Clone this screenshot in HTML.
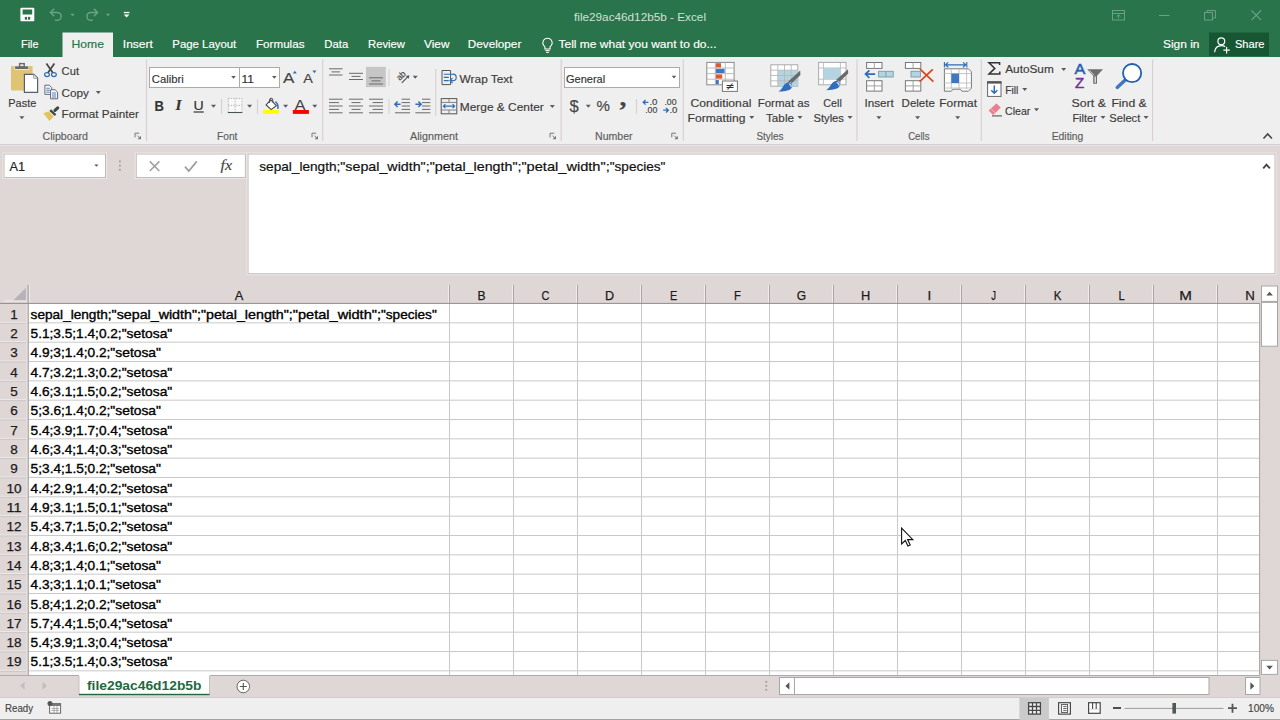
<!DOCTYPE html>
<html lang="en"><head><meta charset="utf-8"><meta name="viewport" content="width=1280, height=720"><title>file29ac46d12b5b - Excel</title>
<style>
html,body{margin:0;padding:0;background:#fff;}
body{width:1280px;height:720px;overflow:hidden;position:relative;font-family:"Liberation Sans", sans-serif;}
.sec{position:absolute;left:0;width:1280px;overflow:hidden;}
.sec svg{display:block;font-family:"Liberation Sans", sans-serif;}
text{white-space:pre;}
</style></head>
<body>
<div class="sec" id="titlebar" style="top:0px;height:57px;background:#29744a"><svg width="1280" height="57" viewBox="0 0 1280 57">
<rect x="20.4" y="7.7" width="13.9" height="13.5" fill="#ffffff" rx="1"/>
<rect x="22.6" y="9.5" width="9.6" height="5" fill="#29744a"/>
<rect x="24.8" y="16.9" width="5.4" height="2.8" fill="#29744a"/>
<rect x="27" y="16.9" width="1" height="2.8" fill="#ffffff"/>
<path d="M51 12.5h6.2a3.9 3.9 0 0 1 0 7.8h-2.2" fill="none" stroke="#6aa285" stroke-width="1.5"/>
<path d="M54.2 8.8l-3.7 3.7l3.7 3.7" fill="none" stroke="#6aa285" stroke-width="1.5"/>
<path d="M70.3 13.7h4.4l-2.2 2.6z" fill="#6aa285"/>
<path d="M97 12.5h-6.2a3.9 3.9 0 0 0 0 7.8h2.2" fill="none" stroke="#6aa285" stroke-width="1.5"/>
<path d="M93.8 8.8l3.7 3.7l-3.7 3.7" fill="none" stroke="#6aa285" stroke-width="1.5"/>
<path d="M105.8 13.7h4.4l-2.2 2.6z" fill="#6aa285"/>
<rect x="123.8" y="11.9" width="5.6" height="1.3" fill="#ffffff"/>
<path d="M123.8 14.4h5.6l-2.8 3z" fill="#ffffff"/>
<text x="574" y="20.5" font-size="11.4" fill="#cfe2d6" textLength="132" lengthAdjust="spacingAndGlyphs">file29ac46d12b5b - Excel</text>
<rect x="1112.5" y="10.5" width="12" height="9.5" fill="none" stroke="#69a184" stroke-width="1"/>
<line x1="1112.5" y1="13.5" x2="1124.5" y2="13.5" stroke="#69a184" stroke-width="1"/>
<path d="M1118.5 18.5v-3.5m-1.8 1.6l1.8-1.8l1.8 1.8" fill="none" stroke="#69a184" stroke-width="1"/>
<line x1="1159" y1="15.5" x2="1169.5" y2="15.5" stroke="#69a184" stroke-width="1"/>
<rect x="1204.5" y="12.5" width="8" height="7.5" fill="none" stroke="#69a184" stroke-width="1"/>
<path d="M1207 12.5v-2h8.5v7.5h-3" fill="none" stroke="#69a184" stroke-width="1"/>
<path d="M1251.5 10.5l9.5 9.5m0-9.5l-9.5 9.5" fill="none" stroke="#69a184" stroke-width="1.1"/>
<rect x="62.5" y="32.5" width="50.5" height="25" fill="#efefef"/>
<text x="21" y="48.4" font-size="11.3" fill="#ffffff" stroke="#ffffff" stroke-width="0.16" textLength="17.5" lengthAdjust="spacingAndGlyphs">File</text>
<text x="71.5" y="48.4" font-size="11.3" fill="#29744a" stroke="#29744a" stroke-width="0.16" textLength="32.5" lengthAdjust="spacingAndGlyphs">Home</text>
<text x="122.8" y="48.4" font-size="11.3" fill="#ffffff" stroke="#ffffff" stroke-width="0.16" textLength="30" lengthAdjust="spacingAndGlyphs">Insert</text>
<text x="172.3" y="48.4" font-size="11.3" fill="#ffffff" stroke="#ffffff" stroke-width="0.16" textLength="64" lengthAdjust="spacingAndGlyphs">Page Layout</text>
<text x="256" y="48.4" font-size="11.3" fill="#ffffff" stroke="#ffffff" stroke-width="0.16" textLength="48.5" lengthAdjust="spacingAndGlyphs">Formulas</text>
<text x="324.3" y="48.4" font-size="11.3" fill="#ffffff" stroke="#ffffff" stroke-width="0.16" textLength="24" lengthAdjust="spacingAndGlyphs">Data</text>
<text x="368" y="48.4" font-size="11.3" fill="#ffffff" stroke="#ffffff" stroke-width="0.16" textLength="37" lengthAdjust="spacingAndGlyphs">Review</text>
<text x="424" y="48.4" font-size="11.3" fill="#ffffff" stroke="#ffffff" stroke-width="0.16" textLength="25.5" lengthAdjust="spacingAndGlyphs">View</text>
<text x="467.8" y="48.4" font-size="11.3" fill="#ffffff" stroke="#ffffff" stroke-width="0.16" textLength="53.5" lengthAdjust="spacingAndGlyphs">Developer</text>
<path d="M547.5 38.2a4.6 4.6 0 0 1 2.6 8.4v2.4h-5.2v-2.4a4.6 4.6 0 0 1 2.6-8.4z" fill="none" stroke="#ffffff" stroke-width="1.1"/>
<path d="M545.3 50.6h4.4M546 52.3h3" fill="none" stroke="#ffffff" stroke-width="1"/>
<text x="558.5" y="48.4" font-size="11.3" fill="#ffffff" stroke="#ffffff" stroke-width="0.16" textLength="158" lengthAdjust="spacingAndGlyphs">Tell me what you want to do...</text>
<text x="1163" y="48.4" font-size="11.3" fill="#ffffff" stroke="#ffffff" stroke-width="0.16" textLength="36.5" lengthAdjust="spacingAndGlyphs">Sign in</text>
<rect x="1209" y="32.5" width="60" height="23.5" fill="#165633"/>
<circle cx="1221.3" cy="41.3" r="3.4" fill="none" stroke="#ffffff" stroke-width="1.2"/>
<path d="M1214.6 52.2c0.4-4.2 3-6.6 6.7-6.6c1.6 0 2.9 0.4 3.9 1.2" fill="none" stroke="#ffffff" stroke-width="1.2"/>
<path d="M1226.6 47v6.4M1223.4 50.2h6.4" fill="none" stroke="#ffffff" stroke-width="1.2"/>
<text x="1235" y="48.4" font-size="11.3" fill="#ffffff" stroke="#ffffff" stroke-width="0.16" textLength="29.5" lengthAdjust="spacingAndGlyphs">Share</text>
</svg></div>
<div class="sec" id="ribbon" style="top:57px;height:89px;background:#efefef"><svg width="1280" height="89" viewBox="0 57 1280 89">
<line x1="0" y1="144.5" x2="1280" y2="144.5" stroke="#d2d0d0" stroke-width="1"/>
<line x1="0" y1="145.5" x2="1280" y2="145.5" stroke="#e8e4e4" stroke-width="1"/>
<line x1="146.5" y1="59.5" x2="146.5" y2="141" stroke="#dad0d0" stroke-width="1.2"/>
<line x1="322.7" y1="59.5" x2="322.7" y2="141" stroke="#dad0d0" stroke-width="1.2"/>
<line x1="561.2" y1="59.5" x2="561.2" y2="141" stroke="#dad0d0" stroke-width="1.2"/>
<line x1="683.3" y1="59.5" x2="683.3" y2="141" stroke="#dad0d0" stroke-width="1.2"/>
<line x1="857" y1="59.5" x2="857" y2="141" stroke="#dad0d0" stroke-width="1.2"/>
<line x1="981.3" y1="59.5" x2="981.3" y2="141" stroke="#dad0d0" stroke-width="1.2"/>
<line x1="1152.6" y1="59.5" x2="1152.6" y2="141" stroke="#dad0d0" stroke-width="1.2"/>
<line x1="221.5" y1="99" x2="221.5" y2="114" stroke="#dad0d0" stroke-width="1.1"/>
<line x1="257.5" y1="99" x2="257.5" y2="114" stroke="#dad0d0" stroke-width="1.1"/>
<line x1="389" y1="69" x2="389" y2="86" stroke="#dad0d0" stroke-width="1.1"/>
<line x1="389" y1="99" x2="389" y2="114" stroke="#dad0d0" stroke-width="1.1"/>
<line x1="435.7" y1="69" x2="435.7" y2="116" stroke="#dad0d0" stroke-width="1.1"/>
<line x1="636.5" y1="99" x2="636.5" y2="114" stroke="#dad0d0" stroke-width="1.1"/>
<text x="42.5" y="139.7" font-size="11.3" fill="#5c5c5c" stroke="#5c5c5c" stroke-width="0.16" textLength="45.5" lengthAdjust="spacingAndGlyphs">Clipboard</text>
<text x="217" y="139.7" font-size="11.3" fill="#5c5c5c" stroke="#5c5c5c" stroke-width="0.16" textLength="20.4" lengthAdjust="spacingAndGlyphs">Font</text>
<text x="410" y="139.7" font-size="11.3" fill="#5c5c5c" stroke="#5c5c5c" stroke-width="0.16" textLength="48" lengthAdjust="spacingAndGlyphs">Alignment</text>
<text x="595" y="139.7" font-size="11.3" fill="#5c5c5c" stroke="#5c5c5c" stroke-width="0.16" textLength="37.6" lengthAdjust="spacingAndGlyphs">Number</text>
<text x="756.4" y="139.7" font-size="11.3" fill="#5c5c5c" stroke="#5c5c5c" stroke-width="0.16" textLength="27" lengthAdjust="spacingAndGlyphs">Styles</text>
<text x="908.2" y="139.7" font-size="11.3" fill="#5c5c5c" stroke="#5c5c5c" stroke-width="0.16" textLength="21.3" lengthAdjust="spacingAndGlyphs">Cells</text>
<text x="1051.7" y="139.7" font-size="11.3" fill="#5c5c5c" stroke="#5c5c5c" stroke-width="0.16" textLength="31.7" lengthAdjust="spacingAndGlyphs">Editing</text>
<path d="M135 137.39999999999998v-4.2h4.2" fill="none" stroke="#777" stroke-width="1"/>
<path d="M137.4 135.6l3 3" fill="none" stroke="#777" stroke-width="1"/>
<path d="M141 135.79999999999998v3.4h-3.4z" fill="#777"/>
<path d="M312 137.39999999999998v-4.2h4.2" fill="none" stroke="#777" stroke-width="1"/>
<path d="M314.4 135.6l3 3" fill="none" stroke="#777" stroke-width="1"/>
<path d="M318 135.79999999999998v3.4h-3.4z" fill="#777"/>
<path d="M550 137.39999999999998v-4.2h4.2" fill="none" stroke="#777" stroke-width="1"/>
<path d="M552.4 135.6l3 3" fill="none" stroke="#777" stroke-width="1"/>
<path d="M556 135.79999999999998v3.4h-3.4z" fill="#777"/>
<path d="M671.8 137.39999999999998v-4.2h4.2" fill="none" stroke="#777" stroke-width="1"/>
<path d="M674.1999999999999 135.6l3 3" fill="none" stroke="#777" stroke-width="1"/>
<path d="M677.8 135.79999999999998v3.4h-3.4z" fill="#777"/>
<path d="M1263.5 138.5l4.2-4.6l4.2 4.6" fill="none" stroke="#444" stroke-width="1.6"/>
<rect x="11" y="66" width="21.6" height="24.6" fill="#dfc474" rx="1"/>
<rect x="14.5" y="65.6" width="14.4" height="4.2" fill="#f4efe0"/>
<rect x="15.1" y="66.3" width="13.2" height="2.7" fill="#6a6a6a"/>
<rect x="19.6" y="63.6" width="4.6" height="3.2" fill="#f4efe0" stroke="#6a6a6a" stroke-width="1.4"/>
<path d="M24.4 74.3h9.4l3.8 3.8v14.2h-13.2z" fill="#fff" stroke="#55606a" stroke-width="1.2"/>
<path d="M33.6 74.5v3.8h3.8" fill="#e4e4e4" stroke="#9aa0a6" stroke-width="0.9"/>
<text x="8.3" y="106.6" font-size="11.3" fill="#3b3b3b" stroke="#3b3b3b" stroke-width="0.16" textLength="28" lengthAdjust="spacingAndGlyphs">Paste</text>
<path d="M19.4 116.2h5l-2.5 3z" fill="#5a5a5a"/>
<path d="M46.4 63.6l6.6 9.4M54.4 63.6l-6.6 9.4" fill="none" stroke="#484848" stroke-width="1.8"/>
<ellipse cx="47" cy="74.6" rx="2.4" ry="2" fill="none" stroke="#2e6db4" stroke-width="1.2"/>
<ellipse cx="53.9" cy="74.6" rx="2.4" ry="2" fill="none" stroke="#2e6db4" stroke-width="1.2"/>
<text x="61.6" y="74.5" font-size="11.3" fill="#3b3b3b" stroke="#3b3b3b" stroke-width="0.16" textLength="17.4" lengthAdjust="spacingAndGlyphs">Cut</text>
<path d="M44.9 85.2h4.4l2.4 2.4v6.8h-6.8z" fill="#fff" stroke="#666" stroke-width="1"/>
<path d="M46.2 88.2h3.6M46.2 90.2h3.6M46.2 92.2h3.6" fill="none" stroke="#2e6db4" stroke-width="0.9"/>
<path d="M50.6 89.8h4.6l2.4 2.4v6.6h-7z" fill="#fff" stroke="#666" stroke-width="1"/>
<path d="M52 93h4.2M52 95h4.2M52 97h4.2" fill="none" stroke="#2e6db4" stroke-width="0.9"/>
<text x="61.6" y="96.6" font-size="11.3" fill="#3b3b3b" stroke="#3b3b3b" stroke-width="0.16" textLength="27.4" lengthAdjust="spacingAndGlyphs">Copy</text>
<path d="M95.8 91h5l-2.5 3z" fill="#5a5a5a"/>
<path d="M43.3 113.3l5.3-1.9l5 5l-4.1 4.6z" fill="#e6c25a"/>
<path d="M50.2 110.2l5.3 5" fill="none" stroke="#3f4b46" stroke-width="2.4"/>
<path d="M55 110.4l2.7-2.5" fill="none" stroke="#3f4b46" stroke-width="3.2" stroke-linecap="round"/>
<text x="61.6" y="118" font-size="11.3" fill="#3b3b3b" stroke="#3b3b3b" stroke-width="0.16" textLength="77.2" lengthAdjust="spacingAndGlyphs">Format Painter</text>
<rect x="149.5" y="67.5" width="90" height="20" fill="#fff" stroke="#ababab" stroke-width="1"/>
<rect x="239.5" y="67.5" width="40" height="20" fill="#fff" stroke="#ababab" stroke-width="1"/>
<text x="151.8" y="82.6" font-size="11.3" fill="#333" stroke="#333" stroke-width="0.16" textLength="32" lengthAdjust="spacingAndGlyphs">Calibri</text>
<path d="M231.2 76h4.6l-2.3 2.8z" fill="#5a5a5a"/>
<text x="241.6" y="82.6" font-size="11.3" fill="#333" stroke="#333" stroke-width="0.16" textLength="12.4" lengthAdjust="spacingAndGlyphs">11</text>
<path d="M272 76h4.6l-2.3 2.8z" fill="#5a5a5a"/>
<text x="283" y="83.4" font-size="15" fill="#444" stroke="#444" stroke-width="0.16" textLength="11.4" lengthAdjust="spacingAndGlyphs">A</text>
<path d="M292.8 73.4h4l-2-2.6z" fill="#2e6db4"/>
<text x="303.2" y="83.4" font-size="12" fill="#444" stroke="#444" stroke-width="0.16" textLength="9.6" lengthAdjust="spacingAndGlyphs">A</text>
<path d="M312.4 70.6h4l-2 2.6z" fill="#2e6db4"/>
<text x="154.4" y="110.6" font-size="14.5" fill="#333" stroke="#333" stroke-width="0.16" textLength="9.4" lengthAdjust="spacingAndGlyphs" font-weight="bold">B</text>
<text x="175.4" y="110.4" font-size="14" fill="#333" stroke="#333" stroke-width="0.16" textLength="6" lengthAdjust="spacingAndGlyphs" font-weight="bold" font-style="italic" font-family='"Liberation Serif", serif'>I</text>
<text x="193.6" y="110.2" font-size="13.5" fill="#333" stroke="#333" stroke-width="0.16" textLength="10.2" lengthAdjust="spacingAndGlyphs">U</text>
<line x1="193.6" y1="112" x2="203.8" y2="112" stroke="#333" stroke-width="1.2"/>
<path d="M211 104.7h5l-2.5 3z" fill="#5a5a5a"/>
<rect x="228.3" y="98.4" width="13.6" height="14" fill="#f8f8f8"/>
<path d="M228.3 98.4h13.6M228.3 105.4h13.6M228.3 98.4v14M235.1 98.4v14M241.9 98.4v14" fill="none" stroke="#b4b4b4" stroke-width="1" stroke-dasharray="1.3 1.3"/>
<line x1="227.8" y1="112.5" x2="242.4" y2="112.5" stroke="#45584d" stroke-width="1.1"/>
<path d="M247.1 104.7h5l-2.5 3z" fill="#5a5a5a"/>
<path d="M270.8 99.9l5.5 5.8l-5.1 3.9l-5.1-4.7z" fill="#fff" stroke="#444" stroke-width="1.1"/>
<path d="M269.6 103v-3.2a1.6 1.6 0 0 1 3.2 0v2.6" fill="none" stroke="#444" stroke-width="1"/>
<path d="M275.4 101.6c2.2 1.8 3 4.4 2.4 7.2" fill="none" stroke="#2e6db4" stroke-width="1.5"/>
<rect x="263" y="110" width="16" height="3.9" fill="#ffff00"/>
<path d="M283.1 104.7h5l-2.5 3z" fill="#5a5a5a"/>
<text x="294.6" y="109.5" font-size="14.4" fill="#444" textLength="11" lengthAdjust="spacingAndGlyphs">A</text>
<rect x="292.9" y="110" width="16" height="3.9" fill="#ff0000"/>
<path d="M312.3 104.7h5l-2.5 3z" fill="#5a5a5a"/>
<line x1="329" y1="68.8" x2="342.6" y2="68.8" stroke="#6a6a6a" stroke-width="1"/>
<line x1="329" y1="75" x2="342.6" y2="75" stroke="#6a6a6a" stroke-width="1"/>
<line x1="331.5" y1="71.9" x2="340" y2="71.9" stroke="#6a6a6a" stroke-width="1"/>
<line x1="349" y1="73.3" x2="363" y2="73.3" stroke="#6a6a6a" stroke-width="1"/>
<line x1="349" y1="79.5" x2="363" y2="79.5" stroke="#6a6a6a" stroke-width="1"/>
<line x1="351.5" y1="76.4" x2="360.5" y2="76.4" stroke="#6a6a6a" stroke-width="1"/>
<rect x="366" y="66.9" width="19.8" height="20.2" fill="#c6c6c6"/>
<line x1="369" y1="77.8" x2="383" y2="77.8" stroke="#6a6a6a" stroke-width="1"/>
<line x1="369" y1="84" x2="383" y2="84" stroke="#6a6a6a" stroke-width="1"/>
<line x1="371.5" y1="80.9" x2="380.5" y2="80.9" stroke="#6a6a6a" stroke-width="1"/>
<text x="396.2" y="78.6" font-size="8.6" fill="#444" stroke="#444" stroke-width="0.16" textLength="9.4" lengthAdjust="spacingAndGlyphs" transform="rotate(-45 401 75.6)">ab</text>
<path d="M401.8 82.8l6.4-6.4" fill="none" stroke="#555" stroke-width="1.2"/>
<path d="M409.4 75.2l-0.7 3.6l-2.9-2.9z" fill="#555"/>
<path d="M412.7 75.7h5l-2.5 3z" fill="#5a5a5a"/>
<path d="M442 70.5h8.6M442 84.6h8.6M442 70.5v14.1M450.6 70.5v14.1" fill="none" stroke="#555" stroke-width="1"/>
<path d="M443.8 74.2h9.4M443.8 77.4h5M443.8 80.6h5" fill="none" stroke="#2e6db4" stroke-width="1.1"/>
<path d="M453 74.2a3.2 3.2 0 0 1 0 6.4h-2.6" fill="none" stroke="#2e6db4" stroke-width="1.2"/>
<path d="M452.6 78.2l-2.6 2.4l2.6 2.4" fill="none" stroke="#2e6db4" stroke-width="1.1"/>
<text x="459.6" y="82.5" font-size="11.3" fill="#3b3b3b" stroke="#3b3b3b" stroke-width="0.16" textLength="53" lengthAdjust="spacingAndGlyphs">Wrap Text</text>
<line x1="329" y1="99.2" x2="342.6" y2="99.2" stroke="#6a6a6a" stroke-width="1"/>
<line x1="329" y1="106" x2="342.6" y2="106" stroke="#6a6a6a" stroke-width="1"/>
<line x1="329" y1="112.8" x2="342.6" y2="112.8" stroke="#6a6a6a" stroke-width="1"/>
<line x1="329" y1="102.6" x2="339" y2="102.6" stroke="#6a6a6a" stroke-width="1"/>
<line x1="329" y1="109.4" x2="339" y2="109.4" stroke="#6a6a6a" stroke-width="1"/>
<line x1="349" y1="99.2" x2="363" y2="99.2" stroke="#6a6a6a" stroke-width="1"/>
<line x1="349" y1="106" x2="363" y2="106" stroke="#6a6a6a" stroke-width="1"/>
<line x1="349" y1="112.8" x2="363" y2="112.8" stroke="#6a6a6a" stroke-width="1"/>
<line x1="351.5" y1="102.6" x2="360.5" y2="102.6" stroke="#6a6a6a" stroke-width="1"/>
<line x1="351.5" y1="109.4" x2="360.5" y2="109.4" stroke="#6a6a6a" stroke-width="1"/>
<line x1="369" y1="99.2" x2="383" y2="99.2" stroke="#6a6a6a" stroke-width="1"/>
<line x1="369" y1="106" x2="383" y2="106" stroke="#6a6a6a" stroke-width="1"/>
<line x1="369" y1="112.8" x2="383" y2="112.8" stroke="#6a6a6a" stroke-width="1"/>
<line x1="372.6" y1="102.6" x2="383" y2="102.6" stroke="#6a6a6a" stroke-width="1"/>
<line x1="372.6" y1="109.4" x2="383" y2="109.4" stroke="#6a6a6a" stroke-width="1"/>
<line x1="401.6" y1="99.2" x2="410" y2="99.2" stroke="#6a6a6a" stroke-width="1"/>
<line x1="401.6" y1="102.6" x2="410" y2="102.6" stroke="#6a6a6a" stroke-width="1"/>
<line x1="401.6" y1="106" x2="410" y2="106" stroke="#6a6a6a" stroke-width="1"/>
<line x1="401.6" y1="109.4" x2="410" y2="109.4" stroke="#6a6a6a" stroke-width="1"/>
<line x1="395" y1="112.8" x2="410" y2="112.8" stroke="#6a6a6a" stroke-width="1"/>
<path d="M395 104.3h5.6M397.6 101.6l-2.8 2.7l2.8 2.7" fill="none" stroke="#2e6db4" stroke-width="1.4"/>
<line x1="422" y1="99.2" x2="430.4" y2="99.2" stroke="#6a6a6a" stroke-width="1"/>
<line x1="422" y1="102.6" x2="430.4" y2="102.6" stroke="#6a6a6a" stroke-width="1"/>
<line x1="422" y1="106" x2="430.4" y2="106" stroke="#6a6a6a" stroke-width="1"/>
<line x1="422" y1="109.4" x2="430.4" y2="109.4" stroke="#6a6a6a" stroke-width="1"/>
<line x1="415.4" y1="112.8" x2="430.4" y2="112.8" stroke="#6a6a6a" stroke-width="1"/>
<path d="M415.4 104.3h5.6M418.4 101.6l2.8 2.7l-2.8 2.7" fill="none" stroke="#2e6db4" stroke-width="1.4"/>
<rect x="441.2" y="98.6" width="15.6" height="15.2" fill="none" stroke="#555" stroke-width="1"/>
<path d="M441.2 102.4h15.6M441.2 110h15.6M449 98.6v3.8M449 110v3.8" fill="none" stroke="#777" stroke-width="0.9"/>
<path d="M443.4 106.2h11.2M445.4 104.2l-2 2l2 2M452.6 104.2l2 2l-2 2" fill="none" stroke="#2e6db4" stroke-width="1.2"/>
<text x="459.8" y="111.3" font-size="11.3" fill="#3b3b3b" stroke="#3b3b3b" stroke-width="0.16" textLength="84" lengthAdjust="spacingAndGlyphs">Merge &amp; Center</text>
<path d="M549.8 105.1h5l-2.5 3z" fill="#5a5a5a"/>
<rect x="564.5" y="67.5" width="115" height="20" fill="#fff" stroke="#ababab" stroke-width="1"/>
<text x="566" y="82.5" font-size="11.3" fill="#333" stroke="#333" stroke-width="0.16" textLength="39.2" lengthAdjust="spacingAndGlyphs">General</text>
<path d="M671.7 75.8h4.6l-2.3 2.8z" fill="#5a5a5a"/>
<text x="569.6" y="111.6" font-size="17" fill="#444" stroke="#444" stroke-width="0.16" textLength="9.2" lengthAdjust="spacingAndGlyphs">$</text>
<path d="M585.8 104.7h5l-2.5 3z" fill="#5a5a5a"/>
<text x="596.6" y="111.4" font-size="15.5" fill="#444" stroke="#444" stroke-width="0.16" textLength="13.4" lengthAdjust="spacingAndGlyphs">%</text>
<text x="619.4" y="106.4" font-size="25" fill="#444" stroke="#444" stroke-width="0.16" textLength="7" lengthAdjust="spacingAndGlyphs" font-weight="bold" font-family='"Liberation Serif", serif'>,</text>
<path d="M643.2 102.3h5.2M645.6 100l-2.4 2.3l2.4 2.3" fill="none" stroke="#2e6db4" stroke-width="1.3"/>
<text x="649.4" y="105.2" font-size="8.5" fill="#444" stroke="#444" stroke-width="0.16" textLength="8" lengthAdjust="spacingAndGlyphs">.0</text>
<text x="645.2" y="113" font-size="8.5" fill="#444" stroke="#444" stroke-width="0.16" textLength="12.2" lengthAdjust="spacingAndGlyphs">.00</text>
<text x="664.4" y="105.2" font-size="8.5" fill="#444" stroke="#444" stroke-width="0.16" textLength="12.2" lengthAdjust="spacingAndGlyphs">.00</text>
<path d="M663.2 110.2h5.2M666 107.9l2.4 2.3l-2.4 2.3" fill="none" stroke="#2e6db4" stroke-width="1.3"/>
<text x="669.4" y="113" font-size="8.5" fill="#444" stroke="#444" stroke-width="0.16" textLength="8" lengthAdjust="spacingAndGlyphs">.0</text>
<rect x="706.8" y="62.4" width="27.3" height="22.4" fill="#fff" stroke="#8a8a8a" stroke-width="1"/>
<path d="M715.3 62.4v22.4M725.3 62.4v22.4M706.8 68h27.3M706.8 73.6h27.3M706.8 79.2h27.3" fill="none" stroke="#b5b5b5" stroke-width="0.9"/>
<rect x="715.8" y="63.2" width="5.2" height="4.2" fill="#dc5b2b"/>
<rect x="715.8" y="68.8" width="8.8" height="4.2" fill="#3f78c0"/>
<rect x="715.8" y="74.4" width="6.4" height="4.2" fill="#dc5b2b"/>
<rect x="715.8" y="80" width="3" height="4.2" fill="#3f78c0"/>
<rect x="722.4" y="81" width="15" height="10.4" fill="#fff" stroke="#777" stroke-width="1"/>
<text x="725.4" y="90.2" font-size="11" fill="#333" stroke="#333" stroke-width="0.16" textLength="9" lengthAdjust="spacingAndGlyphs" font-family='"DejaVu Sans", sans-serif'>≠</text>
<text x="690.4" y="106.6" font-size="11.3" fill="#3b3b3b" stroke="#3b3b3b" stroke-width="0.16" textLength="61" lengthAdjust="spacingAndGlyphs">Conditional</text>
<text x="687.6" y="122.1" font-size="11.3" fill="#3b3b3b" stroke="#3b3b3b" stroke-width="0.16" textLength="57.8" lengthAdjust="spacingAndGlyphs">Formatting</text>
<path d="M749.3 116.1h5l-2.5 3z" fill="#5a5a5a"/>
<rect x="770.8" y="64.8" width="27" height="21.4" fill="#fff" stroke="#aaa" stroke-width="1"/>
<rect x="777.8" y="70.2" width="20" height="16" fill="#b4d4e2"/>
<path d="M777.8 64.8v21.4M784.5 64.8v21.4M791.2 64.8v21.4M770.8 70.2h27M770.8 75.5h27M770.8 80.8h27" fill="none" stroke="#b8b8b8" stroke-width="0.9"/>
<path d="M800.2 70.6l0.2 4.4l-9.6 9.2l-2.6-2.8z" fill="#6a6a6a"/>
<path d="M789.8000000000001 82.19999999999999l1.8 1.9" fill="none" stroke="#f0f0f0" stroke-width="1.2"/>
<path d="M787.4000000000001 82.39999999999999c3.4-0.6 5.4 1.6 4.6 4.6c-0.8 3-4.6 4.4-13.6 4.6c4.4-2.6 5-8 9-9.2z" fill="#2f6dbd"/>
<path d="M788.8000000000001 84.0c1.8 0 2.6 1.4 2.2 3" fill="none" stroke="#dfeaf6" stroke-width="1.2"/>
<text x="757.7" y="106.6" font-size="11.3" fill="#3b3b3b" stroke="#3b3b3b" stroke-width="0.16" textLength="51.8" lengthAdjust="spacingAndGlyphs">Format as</text>
<text x="766" y="122.1" font-size="11.3" fill="#3b3b3b" stroke="#3b3b3b" stroke-width="0.16" textLength="28" lengthAdjust="spacingAndGlyphs">Table</text>
<path d="M797.5 116.1h5l-2.5 3z" fill="#5a5a5a"/>
<rect x="818.6" y="62.4" width="27.4" height="22.4" fill="#fff" stroke="#aaa" stroke-width="1"/>
<path d="M823.4 62.4v22.4M840.4 62.4v22.4M818.6 68h27.4M818.6 79.2h27.4" fill="none" stroke="#b8b8b8" stroke-width="0.9"/>
<rect x="823.4" y="68" width="17" height="11.2" fill="#b4d4e2"/>
<path d="M848 69.2l0.2 4.4l-9.6 9.2l-2.6-2.8z" fill="#6a6a6a"/>
<path d="M837.6 80.8l1.8 1.9" fill="none" stroke="#f0f0f0" stroke-width="1.2"/>
<path d="M835.2 81.0c3.4-0.6 5.4 1.6 4.6 4.6c-0.8 3-4.6 4.4-13.6 4.6c4.4-2.6 5-8 9-9.2z" fill="#2f6dbd"/>
<path d="M836.6 82.60000000000001c1.8 0 2.6 1.4 2.2 3" fill="none" stroke="#dfeaf6" stroke-width="1.2"/>
<text x="823.3" y="106.6" font-size="11.3" fill="#3b3b3b" stroke="#3b3b3b" stroke-width="0.16" textLength="18.5" lengthAdjust="spacingAndGlyphs">Cell</text>
<text x="813.5" y="122.1" font-size="11.3" fill="#3b3b3b" stroke="#3b3b3b" stroke-width="0.16" textLength="30.4" lengthAdjust="spacingAndGlyphs">Styles</text>
<path d="M847.5 116.1h5l-2.5 3z" fill="#5a5a5a"/>
<rect x="866.6" y="62.5" width="15.4" height="5.9" fill="#fff" stroke="#777" stroke-width="1"/>
<path d="M874.3 62.5v5.9" fill="none" stroke="#999" stroke-width="0.9"/>
<rect x="866.6" y="80.7" width="15.4" height="10.4" fill="#fff" stroke="#777" stroke-width="1"/>
<path d="M874.3 80.7v10.4M866.6 85.9h15.4" fill="none" stroke="#999" stroke-width="0.9"/>
<rect x="878.6" y="71.3" width="14.6" height="5.7" fill="#b4d4e2" stroke="#7a9aa8" stroke-width="0.9"/>
<line x1="885.9" y1="71.3" x2="885.9" y2="77" stroke="#7a9aa8" stroke-width="0.9"/>
<path d="M865.4 74.1h9.8M869.4 70.4l-3.9 3.7l3.9 3.7" fill="none" stroke="#2e6db4" stroke-width="1.7"/>
<text x="864.5" y="106.6" font-size="11.3" fill="#3b3b3b" stroke="#3b3b3b" stroke-width="0.16" textLength="29.2" lengthAdjust="spacingAndGlyphs">Insert</text>
<path d="M876.4 116.2h5l-2.5 3z" fill="#5a5a5a"/>
<rect x="905.4" y="62.5" width="15.4" height="5.9" fill="#fff" stroke="#777" stroke-width="1"/>
<path d="M913.1 62.5v5.9" fill="none" stroke="#999" stroke-width="0.9"/>
<rect x="905.4" y="80.7" width="15.4" height="10.4" fill="#fff" stroke="#777" stroke-width="1"/>
<path d="M913.1 80.7v10.4M905.4 85.9h15.4" fill="none" stroke="#999" stroke-width="0.9"/>
<rect x="911" y="71.3" width="9.4" height="5.7" fill="#b4d4e2" stroke="#7a9aa8" stroke-width="0.9"/>
<path d="M920 69.2l13.4 12.4M932.8 69.4l-13.2 12.2" fill="none" stroke="#d64a20" stroke-width="1.8"/>
<text x="901.6" y="106.6" font-size="11.3" fill="#3b3b3b" stroke="#3b3b3b" stroke-width="0.16" textLength="33.2" lengthAdjust="spacingAndGlyphs">Delete</text>
<path d="M915.1 116.2h5l-2.5 3z" fill="#5a5a5a"/>
<path d="M945.4 64.8h20.4M948.2 62.4l-2.8 2.4l2.8 2.4M963 62.4l2.8 2.4l-2.8 2.4" fill="none" stroke="#2e6db4" stroke-width="1.2"/>
<path d="M944.4 62v5.4M966.8 62v5.4" fill="none" stroke="#2e6db4" stroke-width="1.1"/>
<path d="M944.4 68.8h24l3 3v16.4l-3 3h-6.5l-1.6-2h-7.4l-1.6 2h-6.9z" fill="#fff" stroke="#777" stroke-width="1"/>
<path d="M951.3 68.8v20.4M959 68.8v20.4M966.6 68.8v20.4M944.4 73.6h27M944.4 83h27M944.4 88h27" fill="none" stroke="#bdbdbd" stroke-width="0.9"/>
<rect x="951.3" y="73.6" width="7.7" height="9.4" fill="#3f78c0"/>
<text x="939.3" y="106.6" font-size="11.3" fill="#3b3b3b" stroke="#3b3b3b" stroke-width="0.16" textLength="37.7" lengthAdjust="spacingAndGlyphs">Format</text>
<path d="M955.2 116.2h5l-2.5 3z" fill="#5a5a5a"/>
<path d="M999.6 65v-2.2h-10.6l5.8 5.6l-5.8 5.6h10.8v-2.4" fill="none" stroke="#333" stroke-width="1.5"/>
<text x="1005.2" y="73.3" font-size="11.3" fill="#3b3b3b" stroke="#3b3b3b" stroke-width="0.16" textLength="48.6" lengthAdjust="spacingAndGlyphs">AutoSum</text>
<path d="M1061.2 68h5l-2.5 3z" fill="#5a5a5a"/>
<rect x="987.6" y="82" width="13.4" height="14.4" fill="#fff" stroke="#666" stroke-width="1"/>
<rect x="987.1" y="81.2" width="14.4" height="2.4" fill="#555"/>
<path d="M994.3 85.6v7.4M991.2 90.2l3.1 3l3.1-3" fill="none" stroke="#2e6db4" stroke-width="1.5"/>
<text x="1005.2" y="93.8" font-size="11.3" fill="#3b3b3b" stroke="#3b3b3b" stroke-width="0.16" textLength="13.2" lengthAdjust="spacingAndGlyphs">Fill</text>
<path d="M1022.2 87.9h5l-2.5 3z" fill="#5a5a5a"/>
<path d="M996.4 103.4l4.4 4.2l-7.6 7.4l-4.6-4.4z" fill="#ec7d8d"/>
<path d="M990.6 108.4l4.6 4.4" fill="none" stroke="#f6c3ca" stroke-width="1"/>
<line x1="992" y1="115.9" x2="1002" y2="115.9" stroke="#555" stroke-width="1.1"/>
<text x="1005" y="114.5" font-size="11.3" fill="#3b3b3b" stroke="#3b3b3b" stroke-width="0.16" textLength="25.4" lengthAdjust="spacingAndGlyphs">Clear</text>
<path d="M1034 108.3h5l-2.5 3z" fill="#5a5a5a"/>
<text x="1074.5" y="73.5" font-size="15.4" fill="#2160b0" stroke="#2160b0" stroke-width="0.5" textLength="10.8" lengthAdjust="spacingAndGlyphs">A</text>
<text x="1075" y="87.9" font-size="15.4" fill="#7030a0" stroke="#7030a0" stroke-width="0.5" textLength="9.2" lengthAdjust="spacingAndGlyphs">Z</text>
<path d="M1087.2 69.2h15.8l-6 6.6v7.9h-3.8v-7.9z" fill="#6e6e6e"/>
<path d="M1095.2 76.4v6.4" fill="none" stroke="#f4f4f4" stroke-width="1.2"/>
<path d="M1089.6 70.4l4.4 4.8" fill="none" stroke="#e0e0e0" stroke-width="0.8"/>
<text x="1071.6" y="106.6" font-size="11.3" fill="#3b3b3b" stroke="#3b3b3b" stroke-width="0.16" textLength="34.4" lengthAdjust="spacingAndGlyphs">Sort &amp;</text>
<text x="1072.4" y="122.1" font-size="11.3" fill="#3b3b3b" stroke="#3b3b3b" stroke-width="0.16" textLength="24.4" lengthAdjust="spacingAndGlyphs">Filter</text>
<path d="M1100.5 116.1h5l-2.5 3z" fill="#5a5a5a"/>
<path d="M1125.8 79.4l-8.6 8" fill="none" stroke="#3f78c0" stroke-width="3.4" stroke-linecap="round"/>
<circle cx="1132.1" cy="73.1" r="9.1" fill="#fff" stroke="#2160b0" stroke-width="1.8"/>
<text x="1111.4" y="106.6" font-size="11.3" fill="#3b3b3b" stroke="#3b3b3b" stroke-width="0.16" textLength="35.4" lengthAdjust="spacingAndGlyphs">Find &amp;</text>
<text x="1109.3" y="122.1" font-size="11.3" fill="#3b3b3b" stroke="#3b3b3b" stroke-width="0.16" textLength="31" lengthAdjust="spacingAndGlyphs">Select</text>
<path d="M1143.5 116.1h5l-2.5 3z" fill="#5a5a5a"/>
</svg></div>
<div class="sec" id="formulabar" style="top:146px;height:139px;background:#dfd6d6"><svg width="1280" height="139" viewBox="0 146 1280 139">
<rect x="4" y="154" width="101.5" height="23.6" fill="#fff" stroke="#bdb8b8" stroke-width="1"/>
<rect x="3" y="153" width="103.5" height="25.6" fill="none" stroke="#ece8e8" stroke-width="1"/>
<text x="9.5" y="171" font-size="12.6" fill="#222" stroke="#222" stroke-width="0.16" textLength="15.6" lengthAdjust="spacingAndGlyphs">A1</text>
<path d="M94.3 164.4h4.2l-2.1 2.4z" fill="#555"/>
<rect x="119" y="160.5" width="1.8" height="1.8" fill="#a5a0a0"/>
<rect x="119" y="164.7" width="1.8" height="1.8" fill="#a5a0a0"/>
<rect x="119" y="168.9" width="1.8" height="1.8" fill="#a5a0a0"/>
<rect x="136.2" y="154" width="109.2" height="23.6" fill="#fff" stroke="#bdb8b8" stroke-width="1"/>
<rect x="135.2" y="153" width="111.2" height="25.6" fill="none" stroke="#ece8e8" stroke-width="1"/>
<path d="M149.8 161.4l9.6 9.6M159.4 161.4l-9.6 9.6" fill="none" stroke="#a0a0a0" stroke-width="1.5"/>
<path d="M185 166.6l3.8 4.4l8-9.6" fill="none" stroke="#a0a0a0" stroke-width="1.8"/>
<text x="220.6" y="170" font-size="15.5" fill="#444" stroke="#444" stroke-width="0.16" textLength="11.6" lengthAdjust="spacingAndGlyphs" font-style="italic" font-family='"Liberation Serif", serif'>fx</text>
<rect x="248" y="154" width="1027" height="119.8" fill="#fff" stroke="#bdb8b8" stroke-width="1"/>
<rect x="247" y="153" width="1029" height="121.8" fill="none" stroke="#ece8e8" stroke-width="1"/>
<text y="171" font-size="12.6" fill="#111" stroke="#111" stroke-width="0.2"><tspan x="259.3" textLength="80.9945" lengthAdjust="spacingAndGlyphs">sepal_length;</tspan><tspan x="340.295" textLength="89.3564" lengthAdjust="spacingAndGlyphs">"sepal_width";</tspan><tspan x="429.651" textLength="91.7989" lengthAdjust="spacingAndGlyphs">"petal_length";</tspan><tspan x="521.45" textLength="88.2611" lengthAdjust="spacingAndGlyphs">"petal_width";</tspan><tspan x="609.711" textLength="55.7635" lengthAdjust="spacingAndGlyphs">"species"</tspan></text>
<path d="M1263.2 168.4l3.3-3.7l3.3 3.7" fill="none" stroke="#444" stroke-width="1.8"/>
</svg></div>
<div class="sec" id="grid" style="top:285px;height:390px;background:#ffffff"><svg width="1280" height="390" viewBox="0 285 1280 390">
<rect x="0" y="285" width="1280" height="18.6" fill="#dfd6d6"/>
<rect x="0" y="285" width="28" height="390" fill="#dfd6d6"/>
<rect x="1260" y="285" width="20" height="390" fill="#dfd6d6"/>
<line x1="28.5" y1="322.833" x2="1259" y2="322.833" stroke="#c9c9c9" stroke-width="1"/>
<line x1="0" y1="322.333" x2="26.5" y2="322.333" stroke="#efeaea" stroke-width="1"/>
<line x1="0" y1="323.333" x2="26.5" y2="323.333" stroke="#cdc7c7" stroke-width="1"/>
<line x1="28.5" y1="342.167" x2="1259" y2="342.167" stroke="#c9c9c9" stroke-width="1"/>
<line x1="0" y1="341.667" x2="26.5" y2="341.667" stroke="#efeaea" stroke-width="1"/>
<line x1="0" y1="342.667" x2="26.5" y2="342.667" stroke="#cdc7c7" stroke-width="1"/>
<line x1="28.5" y1="361.5" x2="1259" y2="361.5" stroke="#c9c9c9" stroke-width="1"/>
<line x1="0" y1="361" x2="26.5" y2="361" stroke="#efeaea" stroke-width="1"/>
<line x1="0" y1="362" x2="26.5" y2="362" stroke="#cdc7c7" stroke-width="1"/>
<line x1="28.5" y1="380.833" x2="1259" y2="380.833" stroke="#c9c9c9" stroke-width="1"/>
<line x1="0" y1="380.333" x2="26.5" y2="380.333" stroke="#efeaea" stroke-width="1"/>
<line x1="0" y1="381.333" x2="26.5" y2="381.333" stroke="#cdc7c7" stroke-width="1"/>
<line x1="28.5" y1="400.167" x2="1259" y2="400.167" stroke="#c9c9c9" stroke-width="1"/>
<line x1="0" y1="399.667" x2="26.5" y2="399.667" stroke="#efeaea" stroke-width="1"/>
<line x1="0" y1="400.667" x2="26.5" y2="400.667" stroke="#cdc7c7" stroke-width="1"/>
<line x1="28.5" y1="419.5" x2="1259" y2="419.5" stroke="#c9c9c9" stroke-width="1"/>
<line x1="0" y1="419" x2="26.5" y2="419" stroke="#efeaea" stroke-width="1"/>
<line x1="0" y1="420" x2="26.5" y2="420" stroke="#cdc7c7" stroke-width="1"/>
<line x1="28.5" y1="438.833" x2="1259" y2="438.833" stroke="#c9c9c9" stroke-width="1"/>
<line x1="0" y1="438.333" x2="26.5" y2="438.333" stroke="#efeaea" stroke-width="1"/>
<line x1="0" y1="439.333" x2="26.5" y2="439.333" stroke="#cdc7c7" stroke-width="1"/>
<line x1="28.5" y1="458.166" x2="1259" y2="458.166" stroke="#c9c9c9" stroke-width="1"/>
<line x1="0" y1="457.666" x2="26.5" y2="457.666" stroke="#efeaea" stroke-width="1"/>
<line x1="0" y1="458.666" x2="26.5" y2="458.666" stroke="#cdc7c7" stroke-width="1"/>
<line x1="28.5" y1="477.5" x2="1259" y2="477.5" stroke="#c9c9c9" stroke-width="1"/>
<line x1="0" y1="477" x2="26.5" y2="477" stroke="#efeaea" stroke-width="1"/>
<line x1="0" y1="478" x2="26.5" y2="478" stroke="#cdc7c7" stroke-width="1"/>
<line x1="28.5" y1="496.833" x2="1259" y2="496.833" stroke="#c9c9c9" stroke-width="1"/>
<line x1="0" y1="496.333" x2="26.5" y2="496.333" stroke="#efeaea" stroke-width="1"/>
<line x1="0" y1="497.333" x2="26.5" y2="497.333" stroke="#cdc7c7" stroke-width="1"/>
<line x1="28.5" y1="516.166" x2="1259" y2="516.166" stroke="#c9c9c9" stroke-width="1"/>
<line x1="0" y1="515.666" x2="26.5" y2="515.666" stroke="#efeaea" stroke-width="1"/>
<line x1="0" y1="516.666" x2="26.5" y2="516.666" stroke="#cdc7c7" stroke-width="1"/>
<line x1="28.5" y1="535.5" x2="1259" y2="535.5" stroke="#c9c9c9" stroke-width="1"/>
<line x1="0" y1="535" x2="26.5" y2="535" stroke="#efeaea" stroke-width="1"/>
<line x1="0" y1="536" x2="26.5" y2="536" stroke="#cdc7c7" stroke-width="1"/>
<line x1="28.5" y1="554.833" x2="1259" y2="554.833" stroke="#c9c9c9" stroke-width="1"/>
<line x1="0" y1="554.333" x2="26.5" y2="554.333" stroke="#efeaea" stroke-width="1"/>
<line x1="0" y1="555.333" x2="26.5" y2="555.333" stroke="#cdc7c7" stroke-width="1"/>
<line x1="28.5" y1="574.166" x2="1259" y2="574.166" stroke="#c9c9c9" stroke-width="1"/>
<line x1="0" y1="573.666" x2="26.5" y2="573.666" stroke="#efeaea" stroke-width="1"/>
<line x1="0" y1="574.666" x2="26.5" y2="574.666" stroke="#cdc7c7" stroke-width="1"/>
<line x1="28.5" y1="593.5" x2="1259" y2="593.5" stroke="#c9c9c9" stroke-width="1"/>
<line x1="0" y1="593" x2="26.5" y2="593" stroke="#efeaea" stroke-width="1"/>
<line x1="0" y1="594" x2="26.5" y2="594" stroke="#cdc7c7" stroke-width="1"/>
<line x1="28.5" y1="612.833" x2="1259" y2="612.833" stroke="#c9c9c9" stroke-width="1"/>
<line x1="0" y1="612.333" x2="26.5" y2="612.333" stroke="#efeaea" stroke-width="1"/>
<line x1="0" y1="613.333" x2="26.5" y2="613.333" stroke="#cdc7c7" stroke-width="1"/>
<line x1="28.5" y1="632.166" x2="1259" y2="632.166" stroke="#c9c9c9" stroke-width="1"/>
<line x1="0" y1="631.666" x2="26.5" y2="631.666" stroke="#efeaea" stroke-width="1"/>
<line x1="0" y1="632.666" x2="26.5" y2="632.666" stroke="#cdc7c7" stroke-width="1"/>
<line x1="28.5" y1="651.499" x2="1259" y2="651.499" stroke="#c9c9c9" stroke-width="1"/>
<line x1="0" y1="650.999" x2="26.5" y2="650.999" stroke="#efeaea" stroke-width="1"/>
<line x1="0" y1="651.999" x2="26.5" y2="651.999" stroke="#cdc7c7" stroke-width="1"/>
<line x1="28.5" y1="670.833" x2="1259" y2="670.833" stroke="#c9c9c9" stroke-width="1"/>
<line x1="0" y1="670.333" x2="26.5" y2="670.333" stroke="#efeaea" stroke-width="1"/>
<line x1="0" y1="671.333" x2="26.5" y2="671.333" stroke="#cdc7c7" stroke-width="1"/>
<line x1="449.5" y1="303.5" x2="449.5" y2="675" stroke="#c9c9c9" stroke-width="1"/>
<line x1="513.5" y1="303.5" x2="513.5" y2="675" stroke="#c9c9c9" stroke-width="1"/>
<line x1="577.5" y1="303.5" x2="577.5" y2="675" stroke="#c9c9c9" stroke-width="1"/>
<line x1="641.5" y1="303.5" x2="641.5" y2="675" stroke="#c9c9c9" stroke-width="1"/>
<line x1="705.5" y1="303.5" x2="705.5" y2="675" stroke="#c9c9c9" stroke-width="1"/>
<line x1="769.5" y1="303.5" x2="769.5" y2="675" stroke="#c9c9c9" stroke-width="1"/>
<line x1="833.5" y1="303.5" x2="833.5" y2="675" stroke="#c9c9c9" stroke-width="1"/>
<line x1="897.5" y1="303.5" x2="897.5" y2="675" stroke="#c9c9c9" stroke-width="1"/>
<line x1="961.5" y1="303.5" x2="961.5" y2="675" stroke="#c9c9c9" stroke-width="1"/>
<line x1="1025.5" y1="303.5" x2="1025.5" y2="675" stroke="#c9c9c9" stroke-width="1"/>
<line x1="1089.5" y1="303.5" x2="1089.5" y2="675" stroke="#c9c9c9" stroke-width="1"/>
<line x1="1153.5" y1="303.5" x2="1153.5" y2="675" stroke="#c9c9c9" stroke-width="1"/>
<line x1="1217.5" y1="303.5" x2="1217.5" y2="675" stroke="#c9c9c9" stroke-width="1"/>
<line x1="449.5" y1="285" x2="449.5" y2="303" stroke="#aaa6a6" stroke-width="1"/>
<line x1="448.4" y1="285" x2="448.4" y2="303" stroke="#f3eeee" stroke-width="1"/>
<line x1="513.5" y1="285" x2="513.5" y2="303" stroke="#aaa6a6" stroke-width="1"/>
<line x1="512.4" y1="285" x2="512.4" y2="303" stroke="#f3eeee" stroke-width="1"/>
<line x1="577.5" y1="285" x2="577.5" y2="303" stroke="#aaa6a6" stroke-width="1"/>
<line x1="576.4" y1="285" x2="576.4" y2="303" stroke="#f3eeee" stroke-width="1"/>
<line x1="641.5" y1="285" x2="641.5" y2="303" stroke="#aaa6a6" stroke-width="1"/>
<line x1="640.4" y1="285" x2="640.4" y2="303" stroke="#f3eeee" stroke-width="1"/>
<line x1="705.5" y1="285" x2="705.5" y2="303" stroke="#aaa6a6" stroke-width="1"/>
<line x1="704.4" y1="285" x2="704.4" y2="303" stroke="#f3eeee" stroke-width="1"/>
<line x1="769.5" y1="285" x2="769.5" y2="303" stroke="#aaa6a6" stroke-width="1"/>
<line x1="768.4" y1="285" x2="768.4" y2="303" stroke="#f3eeee" stroke-width="1"/>
<line x1="833.5" y1="285" x2="833.5" y2="303" stroke="#aaa6a6" stroke-width="1"/>
<line x1="832.4" y1="285" x2="832.4" y2="303" stroke="#f3eeee" stroke-width="1"/>
<line x1="897.5" y1="285" x2="897.5" y2="303" stroke="#aaa6a6" stroke-width="1"/>
<line x1="896.4" y1="285" x2="896.4" y2="303" stroke="#f3eeee" stroke-width="1"/>
<line x1="961.5" y1="285" x2="961.5" y2="303" stroke="#aaa6a6" stroke-width="1"/>
<line x1="960.4" y1="285" x2="960.4" y2="303" stroke="#f3eeee" stroke-width="1"/>
<line x1="1025.5" y1="285" x2="1025.5" y2="303" stroke="#aaa6a6" stroke-width="1"/>
<line x1="1024.4" y1="285" x2="1024.4" y2="303" stroke="#f3eeee" stroke-width="1"/>
<line x1="1089.5" y1="285" x2="1089.5" y2="303" stroke="#aaa6a6" stroke-width="1"/>
<line x1="1088.4" y1="285" x2="1088.4" y2="303" stroke="#f3eeee" stroke-width="1"/>
<line x1="1153.5" y1="285" x2="1153.5" y2="303" stroke="#aaa6a6" stroke-width="1"/>
<line x1="1152.4" y1="285" x2="1152.4" y2="303" stroke="#f3eeee" stroke-width="1"/>
<line x1="1217.5" y1="285" x2="1217.5" y2="303" stroke="#aaa6a6" stroke-width="1"/>
<line x1="1216.4" y1="285" x2="1216.4" y2="303" stroke="#f3eeee" stroke-width="1"/>
<rect x="26.6" y="304" width="1.5" height="371" fill="#efeaea"/>
<line x1="28.2" y1="284.5" x2="28.2" y2="675" stroke="#8f8c8c" stroke-width="1"/>
<line x1="29.3" y1="285" x2="29.3" y2="303" stroke="#f3eeee" stroke-width="1"/>
<line x1="0" y1="303.4" x2="1260" y2="303.4" stroke="#8f8c8c" stroke-width="1"/>
<path d="M25.8 288v12.5h-12.6z" fill="#b6b3b8"/>
<line x1="4" y1="301" x2="27" y2="301" stroke="#f3eeee" stroke-width="1"/>
<text x="239" y="299.6" font-size="12.6" fill="#1c1c1c" stroke="#1c1c1c" stroke-width="0.25" textLength="8.58849" lengthAdjust="spacingAndGlyphs" text-anchor="middle">A</text>
<text x="481.5" y="299.6" font-size="12.6" fill="#1c1c1c" stroke="#1c1c1c" stroke-width="0.25" textLength="8.07405" lengthAdjust="spacingAndGlyphs" text-anchor="middle">B</text>
<text x="545.5" y="299.6" font-size="12.6" fill="#1c1c1c" stroke="#1c1c1c" stroke-width="0.25" textLength="7.91486" lengthAdjust="spacingAndGlyphs" text-anchor="middle">C</text>
<text x="609.5" y="299.6" font-size="12.6" fill="#1c1c1c" stroke="#1c1c1c" stroke-width="0.25" textLength="9.13245" lengthAdjust="spacingAndGlyphs" text-anchor="middle">D</text>
<text x="673.5" y="299.6" font-size="12.6" fill="#1c1c1c" stroke="#1c1c1c" stroke-width="0.25" textLength="7.24756" lengthAdjust="spacingAndGlyphs" text-anchor="middle">E</text>
<text x="737.5" y="299.6" font-size="12.6" fill="#1c1c1c" stroke="#1c1c1c" stroke-width="0.25" textLength="6.81956" lengthAdjust="spacingAndGlyphs" text-anchor="middle">F</text>
<text x="801.5" y="299.6" font-size="12.6" fill="#1c1c1c" stroke="#1c1c1c" stroke-width="0.25" textLength="9.36438" lengthAdjust="spacingAndGlyphs" text-anchor="middle">G</text>
<text x="865.5" y="299.6" font-size="12.6" fill="#1c1c1c" stroke="#1c1c1c" stroke-width="0.25" textLength="9.24841" lengthAdjust="spacingAndGlyphs" text-anchor="middle">H</text>
<text x="929.5" y="299.6" font-size="12.6" fill="#1c1c1c" stroke="#1c1c1c" stroke-width="0.25" textLength="3.74027" lengthAdjust="spacingAndGlyphs" text-anchor="middle">I</text>
<text x="993.5" y="299.6" font-size="12.6" fill="#1c1c1c" stroke="#1c1c1c" stroke-width="0.25" textLength="4.73226" lengthAdjust="spacingAndGlyphs" text-anchor="middle">J</text>
<text x="1057.5" y="299.6" font-size="12.6" fill="#1c1c1c" stroke="#1c1c1c" stroke-width="0.25" textLength="7.7114" lengthAdjust="spacingAndGlyphs" text-anchor="middle">K</text>
<text x="1121.5" y="299.6" font-size="12.6" fill="#1c1c1c" stroke="#1c1c1c" stroke-width="0.25" textLength="6.23975" lengthAdjust="spacingAndGlyphs" text-anchor="middle">L</text>
<text x="1185.5" y="299.6" font-size="12.6" fill="#1c1c1c" stroke="#1c1c1c" stroke-width="0.25" textLength="12.6903" lengthAdjust="spacingAndGlyphs" text-anchor="middle">M</text>
<text x="1250" y="299.6" font-size="12.6" fill="#1c1c1c" stroke="#1c1c1c" stroke-width="0.25" textLength="9.58154" lengthAdjust="spacingAndGlyphs" text-anchor="middle">N</text>
<text x="14.1" y="318.5" font-size="12.6" fill="#1c1c1c" stroke="#1c1c1c" stroke-width="0.25" textLength="7.5227" lengthAdjust="spacingAndGlyphs" text-anchor="middle">1</text>
<text y="318.5" font-size="12.6" fill="#000" stroke="#000" stroke-width="0.35"><tspan x="30.6" textLength="80.9945" lengthAdjust="spacingAndGlyphs">sepal_length;</tspan><tspan x="111.595" textLength="89.3564" lengthAdjust="spacingAndGlyphs">"sepal_width";</tspan><tspan x="200.951" textLength="91.7989" lengthAdjust="spacingAndGlyphs">"petal_length";</tspan><tspan x="292.75" textLength="88.2611" lengthAdjust="spacingAndGlyphs">"petal_width";</tspan><tspan x="381.011" textLength="55.7635" lengthAdjust="spacingAndGlyphs">"species"</tspan></text>
<text x="14.1" y="337.833" font-size="12.6" fill="#1c1c1c" stroke="#1c1c1c" stroke-width="0.25" textLength="7.5227" lengthAdjust="spacingAndGlyphs" text-anchor="middle">2</text>
<text y="337.833" font-size="12.6" fill="#000" stroke="#000" stroke-width="0.35"><tspan x="30.6" textLength="22.7642" lengthAdjust="spacingAndGlyphs">5.1;</tspan><tspan x="53.3642" textLength="22.7642" lengthAdjust="spacingAndGlyphs">3.5;</tspan><tspan x="76.1284" textLength="22.7642" lengthAdjust="spacingAndGlyphs">1.4;</tspan><tspan x="98.8926" textLength="22.7642" lengthAdjust="spacingAndGlyphs">0.2;</tspan><tspan x="121.657" textLength="50.5801" lengthAdjust="spacingAndGlyphs">"setosa"</tspan></text>
<text x="14.1" y="357.167" font-size="12.6" fill="#1c1c1c" stroke="#1c1c1c" stroke-width="0.25" textLength="7.5227" lengthAdjust="spacingAndGlyphs" text-anchor="middle">3</text>
<text y="357.167" font-size="12.6" fill="#000" stroke="#000" stroke-width="0.35"><tspan x="30.6" textLength="22.7642" lengthAdjust="spacingAndGlyphs">4.9;</tspan><tspan x="53.3642" textLength="11.4949" lengthAdjust="spacingAndGlyphs">3;</tspan><tspan x="64.8591" textLength="22.7642" lengthAdjust="spacingAndGlyphs">1.4;</tspan><tspan x="87.6233" textLength="22.7642" lengthAdjust="spacingAndGlyphs">0.2;</tspan><tspan x="110.387" textLength="50.5801" lengthAdjust="spacingAndGlyphs">"setosa"</tspan></text>
<text x="14.1" y="376.5" font-size="12.6" fill="#1c1c1c" stroke="#1c1c1c" stroke-width="0.25" textLength="7.5227" lengthAdjust="spacingAndGlyphs" text-anchor="middle">4</text>
<text y="376.5" font-size="12.6" fill="#000" stroke="#000" stroke-width="0.35"><tspan x="30.6" textLength="22.7642" lengthAdjust="spacingAndGlyphs">4.7;</tspan><tspan x="53.3642" textLength="22.7642" lengthAdjust="spacingAndGlyphs">3.2;</tspan><tspan x="76.1284" textLength="22.7642" lengthAdjust="spacingAndGlyphs">1.3;</tspan><tspan x="98.8926" textLength="22.7642" lengthAdjust="spacingAndGlyphs">0.2;</tspan><tspan x="121.657" textLength="50.5801" lengthAdjust="spacingAndGlyphs">"setosa"</tspan></text>
<text x="14.1" y="395.833" font-size="12.6" fill="#1c1c1c" stroke="#1c1c1c" stroke-width="0.25" textLength="7.5227" lengthAdjust="spacingAndGlyphs" text-anchor="middle">5</text>
<text y="395.833" font-size="12.6" fill="#000" stroke="#000" stroke-width="0.35"><tspan x="30.6" textLength="22.7642" lengthAdjust="spacingAndGlyphs">4.6;</tspan><tspan x="53.3642" textLength="22.7642" lengthAdjust="spacingAndGlyphs">3.1;</tspan><tspan x="76.1284" textLength="22.7642" lengthAdjust="spacingAndGlyphs">1.5;</tspan><tspan x="98.8926" textLength="22.7642" lengthAdjust="spacingAndGlyphs">0.2;</tspan><tspan x="121.657" textLength="50.5801" lengthAdjust="spacingAndGlyphs">"setosa"</tspan></text>
<text x="14.1" y="415.167" font-size="12.6" fill="#1c1c1c" stroke="#1c1c1c" stroke-width="0.25" textLength="7.5227" lengthAdjust="spacingAndGlyphs" text-anchor="middle">6</text>
<text y="415.167" font-size="12.6" fill="#000" stroke="#000" stroke-width="0.35"><tspan x="30.6" textLength="11.4949" lengthAdjust="spacingAndGlyphs">5;</tspan><tspan x="42.0949" textLength="22.7642" lengthAdjust="spacingAndGlyphs">3.6;</tspan><tspan x="64.8591" textLength="22.7642" lengthAdjust="spacingAndGlyphs">1.4;</tspan><tspan x="87.6233" textLength="22.7642" lengthAdjust="spacingAndGlyphs">0.2;</tspan><tspan x="110.387" textLength="50.5801" lengthAdjust="spacingAndGlyphs">"setosa"</tspan></text>
<text x="14.1" y="434.5" font-size="12.6" fill="#1c1c1c" stroke="#1c1c1c" stroke-width="0.25" textLength="7.5227" lengthAdjust="spacingAndGlyphs" text-anchor="middle">7</text>
<text y="434.5" font-size="12.6" fill="#000" stroke="#000" stroke-width="0.35"><tspan x="30.6" textLength="22.7642" lengthAdjust="spacingAndGlyphs">5.4;</tspan><tspan x="53.3642" textLength="22.7642" lengthAdjust="spacingAndGlyphs">3.9;</tspan><tspan x="76.1284" textLength="22.7642" lengthAdjust="spacingAndGlyphs">1.7;</tspan><tspan x="98.8926" textLength="22.7642" lengthAdjust="spacingAndGlyphs">0.4;</tspan><tspan x="121.657" textLength="50.5801" lengthAdjust="spacingAndGlyphs">"setosa"</tspan></text>
<text x="14.1" y="453.833" font-size="12.6" fill="#1c1c1c" stroke="#1c1c1c" stroke-width="0.25" textLength="7.5227" lengthAdjust="spacingAndGlyphs" text-anchor="middle">8</text>
<text y="453.833" font-size="12.6" fill="#000" stroke="#000" stroke-width="0.35"><tspan x="30.6" textLength="22.7642" lengthAdjust="spacingAndGlyphs">4.6;</tspan><tspan x="53.3642" textLength="22.7642" lengthAdjust="spacingAndGlyphs">3.4;</tspan><tspan x="76.1284" textLength="22.7642" lengthAdjust="spacingAndGlyphs">1.4;</tspan><tspan x="98.8926" textLength="22.7642" lengthAdjust="spacingAndGlyphs">0.3;</tspan><tspan x="121.657" textLength="50.5801" lengthAdjust="spacingAndGlyphs">"setosa"</tspan></text>
<text x="14.1" y="473.166" font-size="12.6" fill="#1c1c1c" stroke="#1c1c1c" stroke-width="0.25" textLength="7.5227" lengthAdjust="spacingAndGlyphs" text-anchor="middle">9</text>
<text y="473.166" font-size="12.6" fill="#000" stroke="#000" stroke-width="0.35"><tspan x="30.6" textLength="11.4949" lengthAdjust="spacingAndGlyphs">5;</tspan><tspan x="42.0949" textLength="22.7642" lengthAdjust="spacingAndGlyphs">3.4;</tspan><tspan x="64.8591" textLength="22.7642" lengthAdjust="spacingAndGlyphs">1.5;</tspan><tspan x="87.6233" textLength="22.7642" lengthAdjust="spacingAndGlyphs">0.2;</tspan><tspan x="110.387" textLength="50.5801" lengthAdjust="spacingAndGlyphs">"setosa"</tspan></text>
<text x="14.1" y="492.5" font-size="12.6" fill="#1c1c1c" stroke="#1c1c1c" stroke-width="0.25" textLength="15.0454" lengthAdjust="spacingAndGlyphs" text-anchor="middle">10</text>
<text y="492.5" font-size="12.6" fill="#000" stroke="#000" stroke-width="0.35"><tspan x="30.6" textLength="22.7642" lengthAdjust="spacingAndGlyphs">4.4;</tspan><tspan x="53.3642" textLength="22.7642" lengthAdjust="spacingAndGlyphs">2.9;</tspan><tspan x="76.1284" textLength="22.7642" lengthAdjust="spacingAndGlyphs">1.4;</tspan><tspan x="98.8926" textLength="22.7642" lengthAdjust="spacingAndGlyphs">0.2;</tspan><tspan x="121.657" textLength="50.5801" lengthAdjust="spacingAndGlyphs">"setosa"</tspan></text>
<text x="14.1" y="511.833" font-size="12.6" fill="#1c1c1c" stroke="#1c1c1c" stroke-width="0.25" textLength="15.0454" lengthAdjust="spacingAndGlyphs" text-anchor="middle">11</text>
<text y="511.833" font-size="12.6" fill="#000" stroke="#000" stroke-width="0.35"><tspan x="30.6" textLength="22.7642" lengthAdjust="spacingAndGlyphs">4.9;</tspan><tspan x="53.3642" textLength="22.7642" lengthAdjust="spacingAndGlyphs">3.1;</tspan><tspan x="76.1284" textLength="22.7642" lengthAdjust="spacingAndGlyphs">1.5;</tspan><tspan x="98.8926" textLength="22.7642" lengthAdjust="spacingAndGlyphs">0.1;</tspan><tspan x="121.657" textLength="50.5801" lengthAdjust="spacingAndGlyphs">"setosa"</tspan></text>
<text x="14.1" y="531.166" font-size="12.6" fill="#1c1c1c" stroke="#1c1c1c" stroke-width="0.25" textLength="15.0454" lengthAdjust="spacingAndGlyphs" text-anchor="middle">12</text>
<text y="531.166" font-size="12.6" fill="#000" stroke="#000" stroke-width="0.35"><tspan x="30.6" textLength="22.7642" lengthAdjust="spacingAndGlyphs">5.4;</tspan><tspan x="53.3642" textLength="22.7642" lengthAdjust="spacingAndGlyphs">3.7;</tspan><tspan x="76.1284" textLength="22.7642" lengthAdjust="spacingAndGlyphs">1.5;</tspan><tspan x="98.8926" textLength="22.7642" lengthAdjust="spacingAndGlyphs">0.2;</tspan><tspan x="121.657" textLength="50.5801" lengthAdjust="spacingAndGlyphs">"setosa"</tspan></text>
<text x="14.1" y="550.5" font-size="12.6" fill="#1c1c1c" stroke="#1c1c1c" stroke-width="0.25" textLength="15.0454" lengthAdjust="spacingAndGlyphs" text-anchor="middle">13</text>
<text y="550.5" font-size="12.6" fill="#000" stroke="#000" stroke-width="0.35"><tspan x="30.6" textLength="22.7642" lengthAdjust="spacingAndGlyphs">4.8;</tspan><tspan x="53.3642" textLength="22.7642" lengthAdjust="spacingAndGlyphs">3.4;</tspan><tspan x="76.1284" textLength="22.7642" lengthAdjust="spacingAndGlyphs">1.6;</tspan><tspan x="98.8926" textLength="22.7642" lengthAdjust="spacingAndGlyphs">0.2;</tspan><tspan x="121.657" textLength="50.5801" lengthAdjust="spacingAndGlyphs">"setosa"</tspan></text>
<text x="14.1" y="569.833" font-size="12.6" fill="#1c1c1c" stroke="#1c1c1c" stroke-width="0.25" textLength="15.0454" lengthAdjust="spacingAndGlyphs" text-anchor="middle">14</text>
<text y="569.833" font-size="12.6" fill="#000" stroke="#000" stroke-width="0.35"><tspan x="30.6" textLength="22.7642" lengthAdjust="spacingAndGlyphs">4.8;</tspan><tspan x="53.3642" textLength="11.4949" lengthAdjust="spacingAndGlyphs">3;</tspan><tspan x="64.8591" textLength="22.7642" lengthAdjust="spacingAndGlyphs">1.4;</tspan><tspan x="87.6233" textLength="22.7642" lengthAdjust="spacingAndGlyphs">0.1;</tspan><tspan x="110.387" textLength="50.5801" lengthAdjust="spacingAndGlyphs">"setosa"</tspan></text>
<text x="14.1" y="589.166" font-size="12.6" fill="#1c1c1c" stroke="#1c1c1c" stroke-width="0.25" textLength="15.0454" lengthAdjust="spacingAndGlyphs" text-anchor="middle">15</text>
<text y="589.166" font-size="12.6" fill="#000" stroke="#000" stroke-width="0.35"><tspan x="30.6" textLength="22.7642" lengthAdjust="spacingAndGlyphs">4.3;</tspan><tspan x="53.3642" textLength="11.4949" lengthAdjust="spacingAndGlyphs">3;</tspan><tspan x="64.8591" textLength="22.7642" lengthAdjust="spacingAndGlyphs">1.1;</tspan><tspan x="87.6233" textLength="22.7642" lengthAdjust="spacingAndGlyphs">0.1;</tspan><tspan x="110.387" textLength="50.5801" lengthAdjust="spacingAndGlyphs">"setosa"</tspan></text>
<text x="14.1" y="608.5" font-size="12.6" fill="#1c1c1c" stroke="#1c1c1c" stroke-width="0.25" textLength="15.0454" lengthAdjust="spacingAndGlyphs" text-anchor="middle">16</text>
<text y="608.5" font-size="12.6" fill="#000" stroke="#000" stroke-width="0.35"><tspan x="30.6" textLength="22.7642" lengthAdjust="spacingAndGlyphs">5.8;</tspan><tspan x="53.3642" textLength="11.4949" lengthAdjust="spacingAndGlyphs">4;</tspan><tspan x="64.8591" textLength="22.7642" lengthAdjust="spacingAndGlyphs">1.2;</tspan><tspan x="87.6233" textLength="22.7642" lengthAdjust="spacingAndGlyphs">0.2;</tspan><tspan x="110.387" textLength="50.5801" lengthAdjust="spacingAndGlyphs">"setosa"</tspan></text>
<text x="14.1" y="627.833" font-size="12.6" fill="#1c1c1c" stroke="#1c1c1c" stroke-width="0.25" textLength="15.0454" lengthAdjust="spacingAndGlyphs" text-anchor="middle">17</text>
<text y="627.833" font-size="12.6" fill="#000" stroke="#000" stroke-width="0.35"><tspan x="30.6" textLength="22.7642" lengthAdjust="spacingAndGlyphs">5.7;</tspan><tspan x="53.3642" textLength="22.7642" lengthAdjust="spacingAndGlyphs">4.4;</tspan><tspan x="76.1284" textLength="22.7642" lengthAdjust="spacingAndGlyphs">1.5;</tspan><tspan x="98.8926" textLength="22.7642" lengthAdjust="spacingAndGlyphs">0.4;</tspan><tspan x="121.657" textLength="50.5801" lengthAdjust="spacingAndGlyphs">"setosa"</tspan></text>
<text x="14.1" y="647.166" font-size="12.6" fill="#1c1c1c" stroke="#1c1c1c" stroke-width="0.25" textLength="15.0454" lengthAdjust="spacingAndGlyphs" text-anchor="middle">18</text>
<text y="647.166" font-size="12.6" fill="#000" stroke="#000" stroke-width="0.35"><tspan x="30.6" textLength="22.7642" lengthAdjust="spacingAndGlyphs">5.4;</tspan><tspan x="53.3642" textLength="22.7642" lengthAdjust="spacingAndGlyphs">3.9;</tspan><tspan x="76.1284" textLength="22.7642" lengthAdjust="spacingAndGlyphs">1.3;</tspan><tspan x="98.8926" textLength="22.7642" lengthAdjust="spacingAndGlyphs">0.4;</tspan><tspan x="121.657" textLength="50.5801" lengthAdjust="spacingAndGlyphs">"setosa"</tspan></text>
<text x="14.1" y="666.499" font-size="12.6" fill="#1c1c1c" stroke="#1c1c1c" stroke-width="0.25" textLength="15.0454" lengthAdjust="spacingAndGlyphs" text-anchor="middle">19</text>
<text y="666.499" font-size="12.6" fill="#000" stroke="#000" stroke-width="0.35"><tspan x="30.6" textLength="22.7642" lengthAdjust="spacingAndGlyphs">5.1;</tspan><tspan x="53.3642" textLength="22.7642" lengthAdjust="spacingAndGlyphs">3.5;</tspan><tspan x="76.1284" textLength="22.7642" lengthAdjust="spacingAndGlyphs">1.4;</tspan><tspan x="98.8926" textLength="22.7642" lengthAdjust="spacingAndGlyphs">0.3;</tspan><tspan x="121.657" textLength="50.5801" lengthAdjust="spacingAndGlyphs">"setosa"</tspan></text>
<line x1="1259.6" y1="303" x2="1259.6" y2="675" stroke="#a5a1a1" stroke-width="1"/>
<rect x="1261.5" y="286" width="16" height="15.4" fill="#fff" stroke="#aaa6a6" stroke-width="1"/>
<path d="M1266.3 295.4l3.3-3.7l3.3 3.7z" fill="#555"/>
<rect x="1261.5" y="302.4" width="16" height="43.8" fill="#fff" stroke="#aaa6a6" stroke-width="1"/>
<rect x="1261.5" y="660.4" width="16" height="14" fill="#fff" stroke="#aaa6a6" stroke-width="1"/>
<path d="M1266.3 665.8l3.3 3.7l3.3-3.7z" fill="#555"/>
<path d="M901.6 528.2v15.8l3.7-3.5l2.6 5.6l2.3-1.1l-2.6-5.4h5.2z" fill="#fff" stroke="#111" stroke-width="1.1"/>
</svg></div>
<div class="sec" id="sheetbar" style="top:675px;height:22px;background:#dfd6d6"><svg width="1280" height="22" viewBox="0 675 1280 22">
<line x1="0" y1="675.4" x2="79" y2="675.4" stroke="#a9a5a5" stroke-width="1"/>
<line x1="209.5" y1="675.4" x2="1260" y2="675.4" stroke="#a9a5a5" stroke-width="1"/>
<path d="M24.5 681.8v8l-4.4-4z" fill="#c3bebe"/>
<path d="M42.5 681.8v8l4.4-4z" fill="#c3bebe"/>
<rect x="79" y="675" width="130.5" height="19.6" fill="#fff"/>
<line x1="79" y1="676" x2="79" y2="695" stroke="#c4bfbf" stroke-width="1"/>
<line x1="209.5" y1="676" x2="209.5" y2="695" stroke="#c4bfbf" stroke-width="1"/>
<rect x="79" y="693.8" width="130.5" height="1.4" fill="#1e6a3e"/>
<text x="87" y="689.8" font-size="12.6" fill="#1e6a3e" textLength="114.5" lengthAdjust="spacingAndGlyphs" font-weight="bold">file29ac46d12b5b</text>
<circle cx="243.3" cy="686.5" r="6.3" fill="#fff" stroke="#666" stroke-width="1"/>
<path d="M239.8 686.5h7M243.3 683v7" fill="none" stroke="#555" stroke-width="1.1"/>
<rect x="765.4" y="680.9" width="1.8" height="1.8" fill="#a5a0a0"/>
<rect x="765.4" y="684.9" width="1.8" height="1.8" fill="#a5a0a0"/>
<rect x="765.4" y="688.9" width="1.8" height="1.8" fill="#a5a0a0"/>
<rect x="779.5" y="677.5" width="15" height="17" fill="#fff" stroke="#aaa6a6" stroke-width="1"/>
<path d="M789.4 682.2v7.6l-4-3.8z" fill="#555"/>
<rect x="794.5" y="677.5" width="414.5" height="17" fill="#fff" stroke="#aaa6a6" stroke-width="1"/>
<rect x="1245.5" y="677.5" width="14.5" height="17" fill="#fff" stroke="#aaa6a6" stroke-width="1"/>
<path d="M1250.4 682.2v7.6l4-3.8z" fill="#555"/>
</svg></div>
<div class="sec" id="statusbar" style="top:697px;height:23px;background:#efefef"><svg width="1280" height="23" viewBox="0 697 1280 23">
<line x1="0" y1="697.3" x2="1280" y2="697.3" stroke="#c9c5c8" stroke-width="1"/>
<line x1="0" y1="719.6" x2="1280" y2="719.6" stroke="#9c9c9c" stroke-width="1"/>
<text x="5" y="711.9" font-size="11.3" fill="#444" stroke="#444" stroke-width="0.16" textLength="28" lengthAdjust="spacingAndGlyphs">Ready</text>
<rect x="49.6" y="703.6" width="11" height="9.6" fill="#fff" stroke="#666" stroke-width="1"/>
<rect x="49.6" y="703.6" width="11" height="2.4" fill="#777"/>
<path d="M51.4 708.4h7.6M51.4 710.4h7.6M54 706v7M57 706v7" fill="none" stroke="#999" stroke-width="0.8"/>
<circle cx="50" cy="703.4" r="2.5" fill="#555"/>
<rect x="1019.4" y="698" width="29.5" height="22" fill="#cacaca"/>
<rect x="1028.6" y="702.7" width="11.8" height="11.4" fill="#f4f4f4" stroke="#484848" stroke-width="1.3"/>
<path d="M1032.5 702.7v11.4M1036.5 702.7v11.4M1028.6 706.5h11.8M1028.6 710.3h11.8" fill="none" stroke="#484848" stroke-width="1.3"/>
<rect x="1058.6" y="702.7" width="11.8" height="11.4" fill="#fff" stroke="#484848" stroke-width="1.2"/>
<rect x="1061.4" y="704.6" width="6.2" height="7.8" fill="#fff" stroke="#555" stroke-width="1"/>
<path d="M1063.2 706.6h3.4M1063.2 708.5h3.4M1063.2 710.4h3.4" fill="none" stroke="#555" stroke-width="0.9"/>
<rect x="1088.6" y="702.7" width="11.6" height="10.6" fill="#fff" stroke="#484848" stroke-width="1.2"/>
<path d="M1092.6 702.7v6.4M1096.2 702.7v6.4" fill="none" stroke="#484848" stroke-width="1.1"/>
<path d="M1089.4 709.2h10" fill="none" stroke="#aaa" stroke-width="0.9" stroke-dasharray="1 1"/>
<rect x="1113" y="707" width="8" height="2" fill="#45544b"/>
<line x1="1124.5" y1="708.4" x2="1223.5" y2="708.4" stroke="#9a9a9a" stroke-width="1"/>
<rect x="1172.4" y="703" width="3.6" height="10.6" fill="#4d5a52"/>
<path d="M1228 708.2h9M1232.5 703.7v9" fill="none" stroke="#555" stroke-width="1.8"/>
<text x="1248" y="712" font-size="11.3" fill="#444" stroke="#444" stroke-width="0.16" textLength="26" lengthAdjust="spacingAndGlyphs">100%</text>
</svg></div>
</body></html>
